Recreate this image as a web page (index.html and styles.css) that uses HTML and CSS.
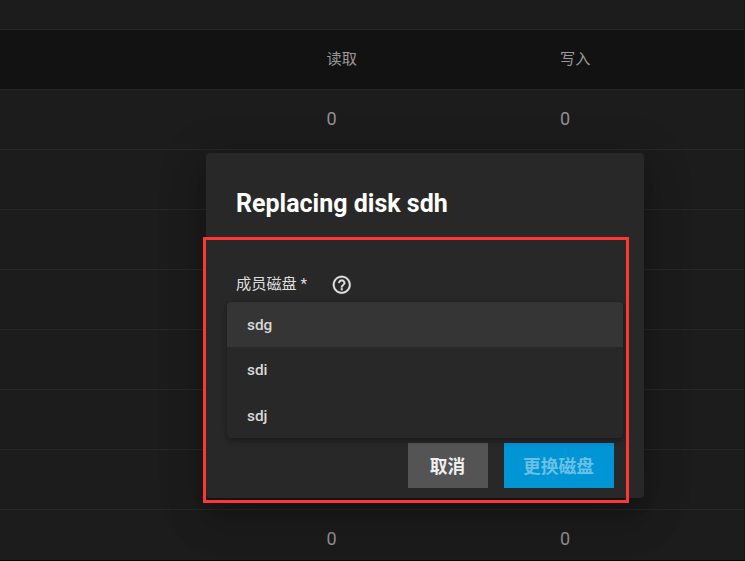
FILE: index.html
```html
<!DOCTYPE html>
<html lang="zh-CN">
<head>
<meta charset="utf-8">
<title>Replacing disk sdh</title>
<link rel="stylesheet" href="styles.css">
</head>
<body>
<div class="table">
  <div class="toolbar"></div>
  <div class="row head"><span></span><span>读取</span><span>写入</span></div>
  <div class="row"><span></span><span>0</span><span>0</span></div>
  <div class="row"></div>
  <div class="row"></div>
  <div class="row"></div>
  <div class="row"></div>
  <div class="row"></div>
  <div class="row"></div>
  <div class="row last"><span></span><span>0</span><span>0</span></div>
</div>
<div class="dialog" role="dialog">
  <h1>Replacing disk sdh</h1>
  <div class="field">
    <label>成员磁盘 *</label>
    <svg class="help" viewBox="0 0 24 24"><path d="M11 18h2v-2h-2v2zm1-16C6.480 2 2 6.480 2 12s4.480 10 10 10 10-4.480 10-10S17.520 2 12 2zm0 18c-4.410 0-8-3.590-8-8s3.590-8 8-8 8 3.590 8 8-3.590 8-8 8zm0-14c-2.210 0-4 1.790-4 4h2c0-1.100.9-2 2-2s2 .9 2 2c0 2-3 1.750-3 5h2c0-2.250 3-2.500 3-5 0-2.210-1.790-4-4-4z"/></svg>
  </div>
  <div class="actions">
    <button class="cancel">取消</button>
    <button class="replace" disabled>更换磁盘</button>
  </div>
</div>
<div class="menu">
  <div class="option active">sdg</div>
  <div class="option">sdi</div>
  <div class="option">sdj</div>
</div>
<div class="highlight"></div>
</body>
</html>
```
FILE: styles.css
```css
* { box-sizing: border-box; }
body {
  margin: 0;
  width: 745px;
  height: 561px;
  overflow: hidden;
  position: relative;
  background: #1c1c1c;
  font-family: Roboto, "Noto Sans CJK SC", sans-serif;
}
.table {
  height: 561px;
  display: flex;
  flex-direction: column;
  border-bottom: 1px solid #050505;
  border-right: 1px solid #161616;
}
.toolbar { flex: none; height: 30px; border-bottom: 1px solid #272727; }
.row {
  flex: none;
  height: 60px;
  padding-bottom: 2px;
  display: grid;
  grid-template-columns: 326.5px 233.5px 1fr;
  align-items: center;
  border-bottom: 1px solid #272727;
  color: #929292;
  font-size: 18px;
}
.head { padding-bottom: 6px; background: #121212; color: #9a9a9a; font-size: 15.2px; }
.last { height: 50px; padding: 8px 0 2px; border-bottom: 0; }
.dialog {
  position: absolute;
  left: 206px;
  top: 153px;
  width: 438px;
  height: 345px;
  padding: 31px 30px 30px;
  border-radius: 4px;
  background: #282828;
  box-shadow: 0 11px 15px -7px rgba(0,0,0,.2), 0 24px 38px 3px rgba(0,0,0,.14), 0 9px 46px 8px rgba(0,0,0,.12);
  display: flex;
  flex-direction: column;
}
h1 { margin: 0; color: #fff; font-size: 25px; line-height: 40px; font-weight: 700; }
.field {
  margin-top: 48px;
  height: 24px;
  display: flex;
  align-items: center;
  gap: 23.5px;
  color: #dedede;
  font-size: 15.2px;
}
.field label { padding-bottom: 5px; }
.help { width: 21.5px; height: 21.5px; margin-top: 1px; fill: #e2e2e2; stroke: #e2e2e2; stroke-width: .3; }
.actions { margin: auto 0 -20px; display: flex; justify-content: flex-end; gap: 16px; }
button {
  height: 45px;
  padding: 0 1px 2px 0;
  border: 0;
  font-family: inherit;
  font-size: 17.7px;
  font-weight: 700;
}
.cancel { width: 80px; background: #545454; color: #f0f0f0; }
.replace { width: 110px; background: #0095d5; color: #6bc0e6; }
.menu {
  position: absolute;
  left: 227px;
  top: 302px;
  width: 396px;
  height: 136px;
  overflow: hidden;
  border-radius: 4px;
  background: #282828;
  box-shadow: 0 2px 4px -1px rgba(0,0,0,.2), 0 4px 5px rgba(0,0,0,.14), 0 1px 10px rgba(0,0,0,.12);
}
.option {
  height: 45.33px;
  padding: 1px 0 0 20px;
  line-height: 45.33px;
  color: #d8d8d8;
  font-size: 15.4px;
  font-weight: 500;
}
.active { background: #353535; }
.highlight {
  position: absolute;
  left: 203px;
  top: 237px;
  width: 426px;
  height: 266px;
  border: 3px solid #ff3636;
}
```
